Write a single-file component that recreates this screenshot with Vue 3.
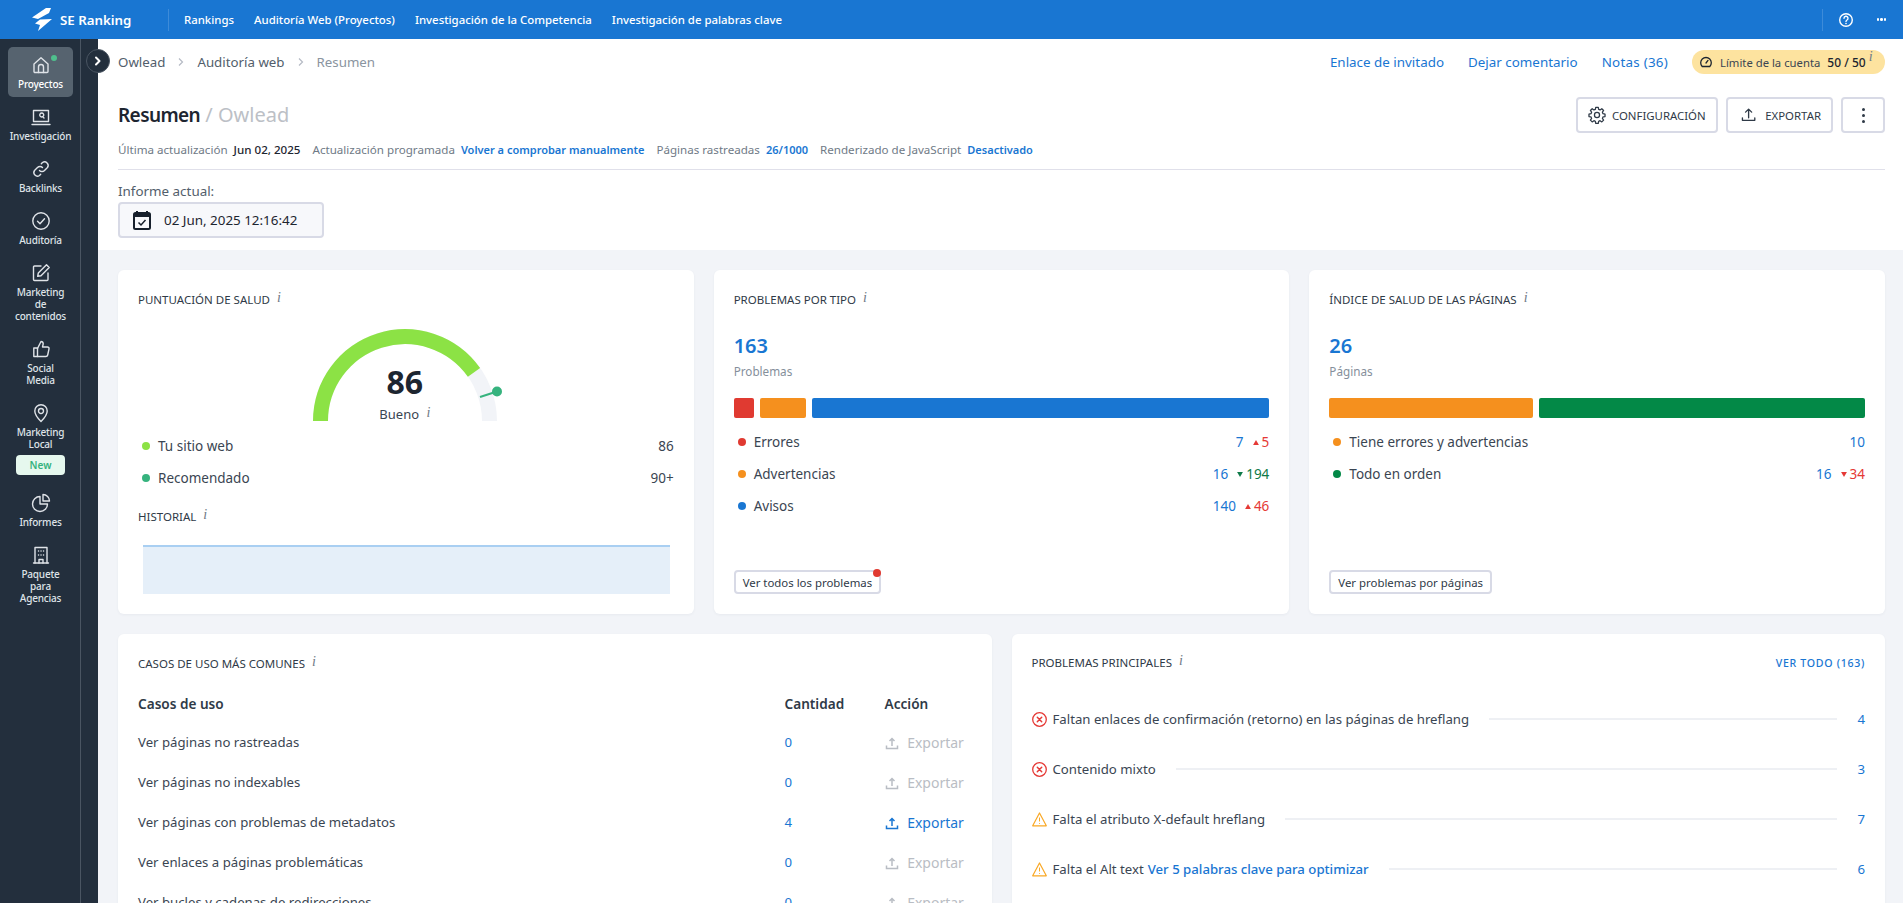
<template>
  <div class="page">
    <header class="topbar">
      <div class="logo">
        <svg width="20" height="23" viewBox="0 0 20 23">
          <path d="M14 0 19 0 17 5 6 11 0 9.5Z" fill="#fff" />
          <path d="M8 11.500 20 11 6 23 8 17 3 15.500Z" fill="#fff" />
        </svg>
        <span>SE Ranking</span>
      </div>
      <nav class="topnav">
        <a v-for="item in topLinks" :key="item">{{ item }}</a>
      </nav>
      <div class="top-right">
        <svg width="16" height="16" viewBox="0 0 16 16" fill="none" stroke="#fff" stroke-width="1.400">
          <circle cx="8" cy="8" r="6.300" />
          <path d="M6 6.300a2 2 0 1 1 3 1.700c-.7.400-1 .8-1 1.600" stroke-linecap="round" />
          <circle cx="8" cy="11.600" r=".5" fill="#fff" stroke-width=".6" />
        </svg>
        <span class="top-dots"><i></i><i></i><i></i></span>
      </div>
    </header>

    <div class="body">
      <aside class="sidebar">
        <div class="rail">
          <a v-for="item in sideItems" :key="item.id" class="side-item" :class="{ active: item.active, 'has-badge': item.badge }">
            <span v-if="item.active" class="side-dot"></span>
            <svg width="20" height="20" viewBox="0 0 20 20" fill="none" stroke="#dfe3e8" stroke-width="1.400" stroke-linecap="round" stroke-linejoin="round">
              <path v-for="d in item.paths" :key="d" :d="d" />
            </svg>
            <span class="side-label">
              <span v-for="line in item.lines" :key="line">{{ line }}</span>
            </span>
            <span v-if="item.badge" class="side-badge">{{ item.badge }}</span>
          </a>
        </div>
        <div class="strip"></div>
        <button class="toggle">
          <svg width="8" height="10" viewBox="0 0 8 10" fill="none" stroke="#fff" stroke-width="2" stroke-linecap="round" stroke-linejoin="round">
            <path d="M2 1.500 5.500 5 2 8.500" />
          </svg>
        </button>
      </aside>

      <main class="content">
        <section class="head">
          <div class="crumbs-row">
            <div class="crumbs">
              <a>Owlead</a>
              <svg class="chev" width="8" height="10" viewBox="0 0 8 10" fill="none" stroke="#b5bac4" stroke-width="1.200"><path d="M2 1.500 5.500 5 2 8.500" /></svg>
              <a>Auditoría web</a>
              <svg class="chev" width="8" height="10" viewBox="0 0 8 10" fill="none" stroke="#b5bac4" stroke-width="1.200"><path d="M2 1.500 5.500 5 2 8.500" /></svg>
              <span class="crumb-last">Resumen</span>
            </div>
            <div class="crumb-links">
              <a>Enlace de invitado</a>
              <a>Dejar comentario</a>
              <a class="notes">Notas (36)</a>
              <div class="limit">
                <svg width="14" height="14" viewBox="0 0 14 14" fill="none" stroke="#1d2530" stroke-width="1.300" stroke-linecap="round">
                  <path d="M3.200 11.500a5.300 5.300 0 1 1 7.600 0Z" stroke-linejoin="round" />
                  <path d="M7 8 9 5.400" />
                </svg>
                <span>Límite de la cuenta</span>
                <b>50 / 50</b>
                <i class="inf sup">i</i>
              </div>
            </div>
          </div>

          <div class="title-row">
            <h1><strong>Resumen</strong> <span>/ Owlead</span></h1>
            <div class="actions">
              <button class="btn cfg">
                <svg width="18" height="18" viewBox="0 0 24 24" fill="none" stroke="#2f3a47" stroke-width="1.700" stroke-linejoin="round">
                  <path d="M10.300 2.500h3.400l.5 2.700 1.900.8 2.300-1.600 2.400 2.400-1.600 2.300.8 1.900 2.700.5v3.400l-2.700.5-.8 1.900 1.600 2.300-2.400 2.400-2.300-1.600-1.900.8-.5 2.700h-3.400l-.5-2.700-1.900-.8-2.300 1.600-2.400-2.400 1.600-2.300-.8-1.900-2.700-.5v-3.400l2.700-.5.8-1.900-1.600-2.300 2.400-2.400 2.300 1.600 1.900-.8Z" transform="translate(0 -.8)" />
                  <circle cx="12" cy="12" r="3.400" />
                </svg>
                CONFIGURACIÓN
              </button>
              <button class="btn exp">
                <svg class="up" width="16" height="16" viewBox="0 0 16 16" fill="none" stroke="#2f3a47" stroke-width="1.400" stroke-linecap="round" stroke-linejoin="round">
                  <path d="M8 11V2M4.800 5 8 1.800 11.200 5M1.500 11v2.600h13V11" />
                </svg>
                EXPORTAR
              </button>
              <button class="btn more"><i></i><i></i><i></i></button>
            </div>
          </div>

          <div class="meta">
            <span>Última actualización</span><b class="dark">Jun 02, 2025</b>
            <span class="next">Actualización programada</span><b>Volver a comprobar manualmente</b>
            <span class="next">Páginas rastreadas</span><b>26/1000</b>
            <span class="next">Renderizado de JavaScript</span><b>Desactivado</b>
          </div>

          <div class="report-label">Informe actual:</div>
          <div class="report-box">
            <svg width="20" height="20" viewBox="0 0 20 20" fill="none">
              <path d="M4 1v3M14 1v3" stroke="#17202c" stroke-width="2" />
              <rect x="1" y="3" width="16" height="16" rx="1.500" stroke="#17202c" stroke-width="2" />
              <rect x="1" y="3" width="16" height="4" fill="#17202c" />
              <path d="M5.500 12.500 8 15l4.500-5" stroke="#17202c" stroke-width="1.500" />
            </svg>
            <span>02 Jun, 2025 12:16:42</span>
          </div>
        </section>

        <section class="dash">
          <div class="row three">
            <div class="card">
              <div class="card-title">PUNTUACIÓN DE SALUD <i class="inf">i</i></div>
              <div class="gauge">
                <svg width="200" height="100" viewBox="0 0 200 100">
                  <path d="M15.500 92a84.500 84.500 0 0 1 169 0" fill="none" stroke="#f2f4f8" stroke-width="15" />
                  <path d="M15.500 92a84.500 84.500 0 0 1 153.500-48.600" fill="none" stroke="#8ce245" stroke-width="15" />
                  <path d="M175 68 192 62.500" stroke="#36b37e" stroke-width="2" />
                  <circle cx="192" cy="62.500" r="5" fill="#36b37e" />
                </svg>
                <div class="gauge-val">86</div>
                <div class="gauge-label">Bueno <i class="inf">i</i></div>
              </div>
              <div class="legend">
                <div class="legend-row"><span class="dot lime"></span><span class="grow">Tu sitio web</span><span>86</span></div>
                <div class="legend-row"><span class="dot teal"></span><span class="grow">Recomendado</span><span>90+</span></div>
              </div>
              <div class="card-title hist">HISTORIAL <i class="inf">i</i></div>
              <div class="chart"></div>
            </div>

            <div class="card stat">
              <div class="card-title">PROBLEMAS POR TIPO <i class="inf">i</i></div>
              <div class="big">163</div>
              <div class="sub">Problemas</div>
              <div class="bar">
                <span class="red" :style="{ width: '20px' }"></span>
                <span class="orange" :style="{ width: '46px' }"></span>
                <span class="blue grow"></span>
              </div>
              <div class="legend">
                <div v-for="row in typeRows" :key="row.label" class="legend-row">
                  <span class="dot" :class="row.color"></span>
                  <span class="grow">{{ row.label }}</span>
                  <a class="val">{{ row.value }}</a>
                  <span class="delta" :class="row.trend">
                    <svg width="6" height="5" viewBox="0 0 7 6"><path :d="row.up ? 'M3.500 0 7 6H0Z' : 'M3.500 6 7 0H0Z'" fill="currentColor" /></svg>
                    {{ row.delta }}
                  </span>
                </div>
              </div>
              <div class="foot"><button class="small-btn">Ver todos los problemas<span class="flag"></span></button></div>
            </div>

            <div class="card stat">
              <div class="card-title">ÍNDICE DE SALUD DE LAS PÁGINAS <i class="inf">i</i></div>
              <div class="big">26</div>
              <div class="sub">Páginas</div>
              <div class="bar">
                <span class="orange" :style="{ width: '204px' }"></span>
                <span class="green grow"></span>
              </div>
              <div class="legend">
                <div class="legend-row"><span class="dot orange"></span><span class="grow">Tiene errores y advertencias</span><a class="val">10</a></div>
                <div class="legend-row">
                  <span class="dot green"></span><span class="grow">Todo en orden</span><a class="val">16</a>
                  <span class="delta bad"><svg width="6" height="5" viewBox="0 0 7 6"><path d="M3.500 6 7 0H0Z" fill="currentColor" /></svg> 34</span>
                </div>
              </div>
              <div class="foot"><button class="small-btn">Ver problemas por páginas</button></div>
            </div>
          </div>

          <div class="row two">
            <div class="card low">
              <div class="card-title">CASOS DE USO MÁS COMUNES <i class="inf">i</i></div>
              <table class="uses">
                <thead>
                  <tr><th>Casos de uso</th><th class="c-num">Cantidad</th><th class="c-act">Acción</th></tr>
                </thead>
                <tbody>
                  <tr v-for="row in useRows" :key="row.label">
                    <td>{{ row.label }}</td>
                    <td class="c-num link">{{ row.count }}</td>
                    <td class="c-act" :class="row.count ? 'link' : 'off'">
                      <svg width="14" height="14" viewBox="0 0 14 14" fill="none" stroke="currentColor" stroke-width="1.500">
                        <path d="M7 10V2.500M4.500 5 7 2.500 9.500 5" />
                        <path d="M1.500 9.500v3h11v-3" />
                      </svg>
                      Exportar
                    </td>
                  </tr>
                </tbody>
              </table>
            </div>

            <div class="card low">
              <div class="card-top">
                <div class="card-title">PROBLEMAS PRINCIPALES <i class="inf">i</i></div>
                <a class="see-all">VER TODO (163)</a>
              </div>
              <div class="issues">
                <div v-for="row in issueRows" :key="row.label" class="issue">
                  <svg v-if="row.kind === 'err'" width="15" height="15" viewBox="0 0 15 15" fill="none" stroke="#e53935" stroke-width="1.300" stroke-linecap="round">
                    <circle cx="7.500" cy="7.500" r="6.800" />
                    <path d="M5.300 5.300 9.700 9.700M9.700 5.300 5.300 9.700" stroke-width="1.500" />
                  </svg>
                  <svg v-else width="15" height="15" viewBox="0 0 15 15" fill="none" stroke="#f9a825" stroke-width="1.200" stroke-linejoin="round">
                    <path d="M7.500 1 14.300 13.800H.7Z" />
                    <path d="M7.500 5.500v4M7.500 11v.8" stroke-width="1" />
                  </svg>
                  <span class="issue-text">{{ row.label }}<a v-if="row.link">{{ row.link }}</a></span>
                  <span class="rule"></span>
                  <a class="issue-num">{{ row.count }}</a>
                </div>
              </div>
            </div>
          </div>
        </section>
      </main>
    </div>
  </div>
</template>

<script setup>
const topLinks = ['Rankings', 'Auditoría Web (Proyectos)', 'Investigación de la Competencia', 'Investigación de palabras clave']

const sideItems = [
  {
    id: 'proyectos',
    active: true,
    lines: ['Proyectos'],
    paths: ['M3 9 10 2.800 17 9v7.500a1 1 0 0 1-1 1H4a1 1 0 0 1-1-1Z', 'M7.500 17.500V12a2.500 2.500 0 0 1 5 0v5.500'],
  },
  {
    id: 'investigacion',
    lines: ['Investigación'],
    paths: ['M2.500 3.500h15v11h-15Z', 'M1 17.500h18', 'M10.800 10a2 2 0 1 0-.1 0M11.500 9.500l1.500 1.500'],
  },
  {
    id: 'backlinks',
    lines: ['Backlinks'],
    paths: ['M8.500 11.500a3.500 3.500 0 0 0 5 0l3-3a3.600 3.600 0 0 0-5-5l-1.200 1.200', 'M11.500 8.500a3.500 3.500 0 0 0-5 0l-3 3a3.600 3.600 0 0 0 5 5l1.200-1.200'],
  },
  {
    id: 'auditoria',
    lines: ['Auditoría'],
    paths: ['M10 1.800a8.200 8.200 0 1 0 0 16.400 8.200 8.200 0 0 0 0-16.400Z', 'M6.500 10.200 9 12.700l4.500-5'],
  },
  {
    id: 'marketing',
    lines: ['Marketing', 'de', 'contenidos'],
    paths: ['M10 3H3.500a1 1 0 0 0-1 1v12.500a1 1 0 0 0 1 1H16a1 1 0 0 0 1-1V10', 'M15.500 1.800 18.200 4.500 10 12.700l-3.300.6.600-3.300Z'],
  },
  {
    id: 'social',
    lines: ['Social', 'Media'],
    paths: ['M6.500 9H2.800v8.500h3.700Z', 'M6.500 9.500 10 2.500c1.500 0 2.200 1 2.200 2.300L11.500 8h5c1 0 1.700.9 1.500 1.800l-1.300 6.200c-.2.900-.9 1.500-1.800 1.500H6.500'],
  },
  {
    id: 'local',
    lines: ['Marketing', 'Local'],
    badge: 'New',
    paths: ['M10 18.500C6 14.500 3.800 11.500 3.800 8a6.200 6.200 0 0 1 12.400 0c0 3.500-2.200 6.500-6.200 10.500Z', 'M10 5.500a2.500 2.500 0 1 0 0 5 2.500 2.500 0 0 0 0-5Z'],
  },
  {
    id: 'informes',
    lines: ['Informes'],
    paths: ['M9 3.500a7.500 7.500 0 1 0 7.500 7.500H9Z', 'M12 1.500a6.500 6.500 0 0 1 6.500 6.500H12Z'],
  },
  {
    id: 'paquete',
    lines: ['Paquete', 'para', 'Agencias'],
    paths: ['M4 18V2.500h12V18', 'M2.500 18h15', 'M8 18v-3.500h4V18', 'M7.500 6h.1M12.500 6h.1M7.500 10h.1M12.500 10h.1M10 6h.1M10 10h.1'],
  },
]

const typeRows = [
  { label: 'Errores', color: 'red', value: 7, delta: 5, up: true, trend: 'bad' },
  { label: 'Advertencias', color: 'orange', value: 16, delta: 194, up: false, trend: 'good' },
  { label: 'Avisos', color: 'blue', value: 140, delta: 46, up: true, trend: 'bad' },
]

const useRows = [
  { label: 'Ver páginas no rastreadas', count: 0 },
  { label: 'Ver páginas no indexables', count: 0 },
  { label: 'Ver páginas con problemas de metadatos', count: 4 },
  { label: 'Ver enlaces a páginas problemáticas', count: 0 },
  { label: 'Ver bucles y cadenas de redirecciones', count: 0 },
]

const issueRows = [
  { kind: 'err', label: 'Faltan enlaces de confirmación (retorno) en las páginas de hreflang', count: 4 },
  { kind: 'err', label: 'Contenido mixto', count: 3 },
  { kind: 'warn', label: 'Falta el atributo X-default hreflang', count: 7 },
  { kind: 'warn', label: 'Falta el Alt text', link: 'Ver 5 palabras clave para optimizar', count: 6 },
]
</script>

<style>
html,
body {
  margin: 0;
  height: 100%;
  overflow: hidden;
}
</style>

<style scoped>
.page {
  height: 903px;
  overflow: hidden;
  font-family: "Noto Sans", "Liberation Sans", sans-serif;
  color: #3a4552;
  font-size: 14px;
  background: #f2f4f8;
}

.topbar {
  height: 39px;
  background: #1976d2;
  color: #fff;
  display: flex;
  align-items: center;
}
.logo {
  display: flex;
  align-items: center;
  width: 169px;
  padding-left: 32px;
  box-sizing: border-box;
  height: 22px;
  border-right: 1px solid #3d8bd9;
  gap: 8px;
  font-size: 13.300px;
  font-weight: 600;
}
.topnav {
  display: flex;
  gap: 20px;
  padding-left: 15px;
  font-size: 11.400px;
  font-weight: 500;
}
.top-right {
  margin-left: auto;
  display: flex;
  align-items: center;
  height: 22px;
  border-left: 1px solid #3d8bd9;
  padding-left: 15px;
  padding-right: 17px;
  gap: 23px;
}
.top-dots {
  display: flex;
  gap: 1px;
}
.top-dots i {
  width: 2.500px;
  height: 2.500px;
  background: #fff;
  border-radius: 50%;
}

.body {
  display: flex;
  height: 864px;
}

.sidebar {
  width: 98px;
  flex: none;
  display: flex;
  background: #232f3d;
  position: relative;
}
.rail {
  width: 81px;
  box-sizing: border-box;
  padding: 8px 8px 0;
  border-right: 1px solid #4a5562;
  display: flex;
  flex-direction: column;
  gap: 2px;
}
.strip {
  flex: 1;
}
.side-item {
  position: relative;
  display: flex;
  flex-direction: column;
  align-items: center;
  padding: 8px 0 7px;
  border-radius: 5px;
  color: #dfe3e8;
  width: 65px;
}
.side-item.active {
  background: #56636f;
  color: #fff;
}
.has-badge {
  margin-bottom: 1px;
}
.side-dot {
  position: absolute;
  top: 8px;
  left: 43px;
  width: 6px;
  height: 6px;
  border-radius: 50%;
  background: #4fc08d;
}
.side-label {
  display: flex;
  flex-direction: column;
  align-items: center;
  margin-top: 3px;
  font-size: 10px;
  line-height: 12px;
  font-weight: 500;
  letter-spacing: -0.2px;
  white-space: nowrap;
}
.side-badge {
  margin-top: 5px;
  width: 49px;
  height: 20px;
  line-height: 20px;
  text-align: center;
  background: #e6f8ee;
  color: #36b37e;
  border-radius: 4px;
  font-size: 10px;
  font-weight: 600;
}
.toggle {
  position: absolute;
  left: 86px;
  top: 10px;
  width: 24px;
  height: 24px;
  padding: 0;
  border: 1px solid #4a5562;
  border-radius: 50%;
  background: #232f3d;
  display: flex;
  align-items: center;
  justify-content: center;
}

.content {
  flex: 1;
  min-width: 0;
}
.head {
  background: #fff;
  height: 211px;
  box-sizing: border-box;
  padding: 11px 18px 0 20px;
}
.crumbs-row {
  display: flex;
  justify-content: space-between;
  align-items: center;
  height: 24px;
}
.crumbs {
  display: flex;
  align-items: center;
  font-size: 13.300px;
  color: #525e6b;
}
.chev {
  margin: 0 12px;
}
.crumb-last {
  color: #8a94a0;
}
.crumb-links {
  display: flex;
  align-items: center;
  font-size: 13.400px;
  color: #1976d2;
}
.crumb-links > a {
  margin-right: 24px;
}
.crumb-links .notes {
  letter-spacing: 0.25px;
}
.limit {
  display: flex;
  align-items: center;
  gap: 7px;
  width: 193px;
  box-sizing: border-box;
  height: 24px;
  padding: 0 0 0 7px;
  background: #fde39f;
  border-radius: 12px;
  color: #3a4552;
  font-size: 11.300px;
}
.limit b {
  font-weight: 500;
  font-size: 12px;
  color: #1d2530;
}

.title-row {
  display: flex;
  justify-content: space-between;
  align-items: center;
  margin-top: 23px;
  height: 36px;
}
h1 {
  margin: 0;
  font-size: 20px;
  line-height: 26px;
  font-weight: 400;
  color: #1d2530;
}
h1 strong {
  font-size: 19px;
  font-weight: 600;
  letter-spacing: -0.6px;
}
h1 span {
  color: #bcc0c6;
}
.actions {
  display: flex;
  gap: 8px;
}
.btn {
  display: flex;
  align-items: center;
  gap: 6px;
  height: 36px;
  box-sizing: border-box;
  padding: 0 10px;
  border: 2px solid #d8dae6;
  border-radius: 4px;
  background: #fff;
  font-family: inherit;
  font-size: 11.400px;
  color: #2f3a47;
}
.cfg {
  width: 142px;
}
.exp {
  width: 107px;
}
.exp .up {
  margin-left: 3px;
  margin-right: 3px;
}
.more {
  width: 44px;
  flex-direction: column;
  justify-content: center;
  gap: 3px;
  padding: 0;
}
.more i {
  width: 3px;
  height: 3px;
  background: #2f3a47;
  border-radius: 50%;
}

.meta {
  display: flex;
  align-items: center;
  height: 35px;
  margin-top: -1px;
  border-bottom: 1px solid #e0e0ea;
  padding-bottom: 2px;
  font-size: 11.600px;
  color: #6f7a86;
  gap: 6px;
}
.meta b {
  font-size: 11px;
  font-weight: 600;
  color: #1976d2;
}
.meta b.dark {
  font-size: 11.600px;
  font-weight: 500;
  color: #1d2530;
}
.meta .next {
  margin-left: 6px;
}

.report-label {
  margin-top: 11px;
  font-size: 13.400px;
  line-height: 20px;
  color: #525e6b;
}
.report-box {
  display: flex;
  align-items: center;
  gap: 11px;
  width: 206px;
  height: 36px;
  margin-top: 1px;
  box-sizing: border-box;
  padding-left: 13px;
  background: #f7f8fb;
  border: 2px solid #d8dae6;
  border-radius: 4px;
  font-size: 13.400px;
  color: #1d2530;
}

.dash {
  padding: 20px 18px 0 20px;
  display: flex;
  flex-direction: column;
  gap: 20px;
}
.row {
  display: grid;
  gap: 20px;
}
.three {
  grid-template-columns: repeat(3, 1fr);
  height: 344px;
}
.two {
  grid-template-columns: repeat(2, 1fr);
}
.card {
  position: relative;
  background: #fff;
  border-radius: 6px;
  padding: 20px;
  box-shadow: 0 1px 3px rgba(40, 50, 80, 0.05);
  display: flex;
  flex-direction: column;
}
.low {
  height: 400px;
}
.card-title {
  font-size: 11.500px;
  line-height: 20px;
  font-weight: 400;
  color: #2f3a47;
}
.inf {
  font-family: "Liberation Serif", serif;
  font-size: 14px;
  font-style: italic;
  color: #6f7a86;
  margin-left: 4px;
  position: relative;
  top: -2px;
}
.inf.sup {
  top: -5px;
  margin-left: -4px;
}

.gauge {
  position: relative;
  width: 200px;
  height: 100px;
  margin: 19px auto 1px;
  left: -1px;
}
.gauge svg {
  display: block;
}
.gauge-val {
  position: absolute;
  left: 0;
  right: 0;
  top: 33px;
  text-align: center;
  font-size: 32px;
  line-height: 40px;
  font-weight: 700;
  color: #1d2530;
}
.gauge-label {
  position: absolute;
  left: 0;
  right: 0;
  top: 75px;
  text-align: center;
  font-size: 13px;
  line-height: 20px;
  color: #3a4552;
}
.legend {
  display: flex;
  flex-direction: column;
}
.legend-row {
  display: flex;
  align-items: center;
  height: 32px;
  font-size: 13.500px;
  gap: 8px;
}
.grow {
  flex: 1;
}
.dot {
  width: 8px;
  height: 8px;
  border-radius: 50%;
  margin-left: 4px;
}
.lime { background: #8ce245; }
.teal { background: #36b37e; }
.red { background: #e03a31; }
.orange { background: #f5901e; }
.blue { background: #1976d2; }
.green { background: #038947; }

.hist {
  margin-top: 13px;
}
.chart {
  margin: 18px 4px 0 5px;
  height: 47px;
  background: #e5eff9;
  border-top: 2px solid #a9cff2;
}

.big {
  margin-top: 23px;
  font-size: 20px;
  line-height: 26px;
  font-weight: 600;
  color: #1976d2;
}
.sub {
  margin-top: 4px;
  font-size: 11.700px;
  line-height: 16px;
  color: #858f9b;
}
.bar {
  display: flex;
  gap: 6px;
  height: 20px;
  margin-top: 19px;
  margin-bottom: 8px;
}
.bar span {
  border-radius: 2px;
}
.val {
  color: #1976d2;
}
.delta {
  display: inline-flex;
  align-items: center;
  gap: 3px;
  margin-left: 1px;
}
.delta.bad {
  color: #e53935;
}
.delta.good {
  color: #0e7a48;
}
.foot {
  margin-top: auto;
}
.small-btn {
  position: relative;
  height: 24px;
  box-sizing: border-box;
  padding: 0 7px;
  border: 2px solid #d8dae6;
  border-radius: 4px;
  background: #fff;
  font-family: inherit;
  font-size: 11.400px;
  color: #2f3a47;
  white-space: nowrap;
}
.flag {
  position: absolute;
  right: -2px;
  top: -3px;
  width: 8px;
  height: 8px;
  border-radius: 50%;
  background: #e03a31;
}

.uses {
  width: 100%;
  border-collapse: collapse;
  margin-top: 10px;
}
.uses th,
.uses td {
  text-align: left;
  padding: 0;
  font-size: 13.200px;
  height: 40px;
  font-weight: 400;
}
.uses th {
  height: 38px;
  font-size: 13.600px;
  font-weight: 600;
  color: #2f3a47;
}
.c-num {
  width: 100px;
}
.c-act {
  width: 87px;
}
.uses td.c-act {
  font-size: 14px;
}
.uses td.c-act svg {
  vertical-align: -2px;
  margin-right: 5px;
}
.link {
  color: #1976d2;
}
.off {
  color: #b9bdc4;
}

.card-top {
  display: flex;
  justify-content: space-between;
  align-items: center;
  margin-top: -1px;
}
.see-all {
  font-size: 10.600px;
  letter-spacing: 0.7px;
  font-weight: 500;
  color: #1976d2;
}
.issues {
  margin-top: 21px;
}
.issue {
  display: flex;
  align-items: center;
  height: 50px;
  font-size: 13.200px;
}
.issue-text {
  margin-left: 6px;
  white-space: nowrap;
}
.issue-text a {
  margin-left: 4px;
  color: #1976d2;
  font-weight: 500;
}
.rule {
  flex: 1;
  height: 2px;
  margin: 0 20px;
  background: #eef0f4;
}
.issue-num {
  color: #1976d2;
  width: 8px;
  text-align: right;
}
</style>
